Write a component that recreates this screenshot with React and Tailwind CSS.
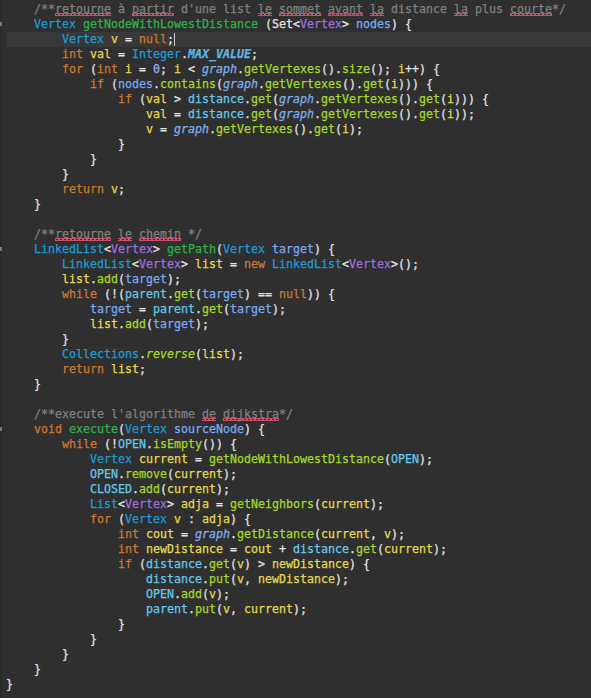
import React from 'react';

// token colours, roughly the Eclipse dark editor theme
const squiggle =
  'bg-[linear-gradient(45deg,transparent_40%,#c8506a_40%,#c8506a_60%,transparent_60%),linear-gradient(-45deg,transparent_40%,#c8506a_40%,#c8506a_60%,transparent_60%)] bg-[length:4px_3px] bg-repeat-x bg-bottom';

const styles = {
  c: 'text-[#808080]',
  cu: `text-[#808080] ${squiggle}`,
  k: 'text-[#cc7a30]',
  t: 'text-[#1e9bd7]',
  ta: 'text-[#a06ee0]',
  md: 'text-[#2eb14b]',
  m: 'text-[#a6d82e]',
  sm: 'text-[#a6d82e] italic',
  lv: 'text-[#e6d952]',
  p: 'text-[#7aa9f5]',
  f: 'text-[#66c8ec]',
  sf: 'text-[#80b0f0] italic',
  sfb: 'text-[#5fb2e5] italic font-bold',
  n: 'text-[#9aa6f0]',
};

const code = [
  '    [c:/**][cu:retourne][c: à ][cu:partir][c: d\'une list ][cu:le][c: ][cu:sommet][c: ][cu:avant][c: ][cu:la][c: distance ][cu:la][c: plus ][cu:courte][c:*/]',
  '    [t:Vertex] [md:getNodeWithLowestDistance] (Set<[ta:Vertex]> [p:nodes]) {',
  '        [t:Vertex] [lv:v] = [k:null];',
  '        [k:int] [lv:val] = [t:Integer].[sfb:MAX_VALUE];',
  '        [k:for] ([k:int] [lv:i] = [n:0]; [lv:i] < [sf:graph].[m:getVertexes]().[m:size](); [lv:i]++) {',
  '            [k:if] ([p:nodes].[m:contains]([sf:graph].[m:getVertexes]().[m:get]([lv:i]))) {',
  '                [k:if] ([lv:val] > [f:distance].[m:get]([sf:graph].[m:getVertexes]().[m:get]([lv:i]))) {',
  '                    [lv:val] = [f:distance].[m:get]([sf:graph].[m:getVertexes]().[m:get]([lv:i]));',
  '                    [lv:v] = [sf:graph].[m:getVertexes]().[m:get]([lv:i]);',
  '                }',
  '            }',
  '        }',
  '        [k:return] [lv:v];',
  '    }',
  '',
  '    [c:/**][cu:retourne][c: ][cu:le][c: ][cu:chemin][c: */]',
  '    [t:LinkedList]<[ta:Vertex]> [md:getPath]([t:Vertex] [p:target]) {',
  '        [t:LinkedList]<[ta:Vertex]> [lv:list] = [k:new] [t:LinkedList]<[ta:Vertex]>();',
  '        [lv:list].[m:add]([p:target]);',
  '        [k:while] (!([f:parent].[m:get]([p:target]) == [k:null])) {',
  '            [p:target] = [f:parent].[m:get]([p:target]);',
  '            [lv:list].[m:add]([p:target]);',
  '        }',
  '        [t:Collections].[sm:reverse]([lv:list]);',
  '        [k:return] [lv:list];',
  '    }',
  '',
  '    [c:/**execute l\'algorithme ][cu:de][c: ][cu:dijkstra][c:*/]',
  '    [k:void] [md:execute]([t:Vertex] [p:sourceNode]) {',
  '        [k:while] (![f:OPEN].[m:isEmpty]()) {',
  '            [t:Vertex] [lv:current] = [m:getNodeWithLowestDistance]([f:OPEN]);',
  '            [f:OPEN].[m:remove]([lv:current]);',
  '            [f:CLOSED].[m:add]([lv:current]);',
  '            [t:List]<[ta:Vertex]> [lv:adja] = [m:getNeighbors]([lv:current]);',
  '            [k:for] ([t:Vertex] [lv:v] : [lv:adja]) {',
  '                [k:int] [lv:cout] = [sf:graph].[m:getDistance]([lv:current], [lv:v]);',
  '                [k:int] [lv:newDistance] = [lv:cout] + [f:distance].[m:get]([lv:current]);',
  '                [k:if] ([f:distance].[m:get]([lv:v]) > [lv:newDistance]) {',
  '                    [f:distance].[m:put]([lv:v], [lv:newDistance]);',
  '                    [f:OPEN].[m:add]([lv:v]);',
  '                    [f:parent].[m:put]([lv:v], [lv:current]);',
  '                }',
  '            }',
  '        }',
  '    }',
  '}',
];

const foldLines = [1, 16, 28];
const currentLine = 2;

function tokenize(line) {
  const out = [];
  const re = /\[(\w+):([^\]]*)\]/g;
  let last = 0;
  let m;
  while ((m = re.exec(line))) {
    if (m.index > last) out.push(['', line.slice(last, m.index)]);
    out.push([m[1], m[2]]);
    last = re.lastIndex;
  }
  if (last < line.length) out.push(['', line.slice(last)]);
  return out;
}

const Line = ({ text, index }) => {
  const active = index === currentLine;
  return (
    <div className={`relative h-[15px] leading-[15px] whitespace-pre ${active ? 'bg-[#383838] ml-1' : 'pl-1'}`}>
      {foldLines.includes(index) && (
        <span className="absolute -left-[2px] top-[5px] w-[2px] h-[4px] bg-[#6b7c8c]" />
      )}
      {tokenize(text).map(([kind, value], i) => (
        <span key={i} className={styles[kind] || 'text-[#e4e4e4]'}>
          {value}
        </span>
      ))}
      {active && <span className="inline-block align-top mt-[1px] w-px h-[13px] bg-[#d0d0d0]" />}
      {text === '' && ' '}
    </div>
  );
};

const App = () => {
  return (
    <div className="min-h-screen bg-[#2f2f2f] flex">
      <div className="w-[2px] shrink-0 bg-[#2a2a2a]" />
      <div
        className="flex-1 pt-[2px] text-[11.63px] text-[#e4e4e4] [-webkit-text-stroke:0.25px_currentColor]"
        style={{ fontFamily: '"DejaVu Sans Mono", "Liberation Mono", monospace' }}
      >
        {code.map((text, i) => (
          <Line key={i} text={text} index={i} />
        ))}
      </div>
    </div>
  );
};

export default App;
